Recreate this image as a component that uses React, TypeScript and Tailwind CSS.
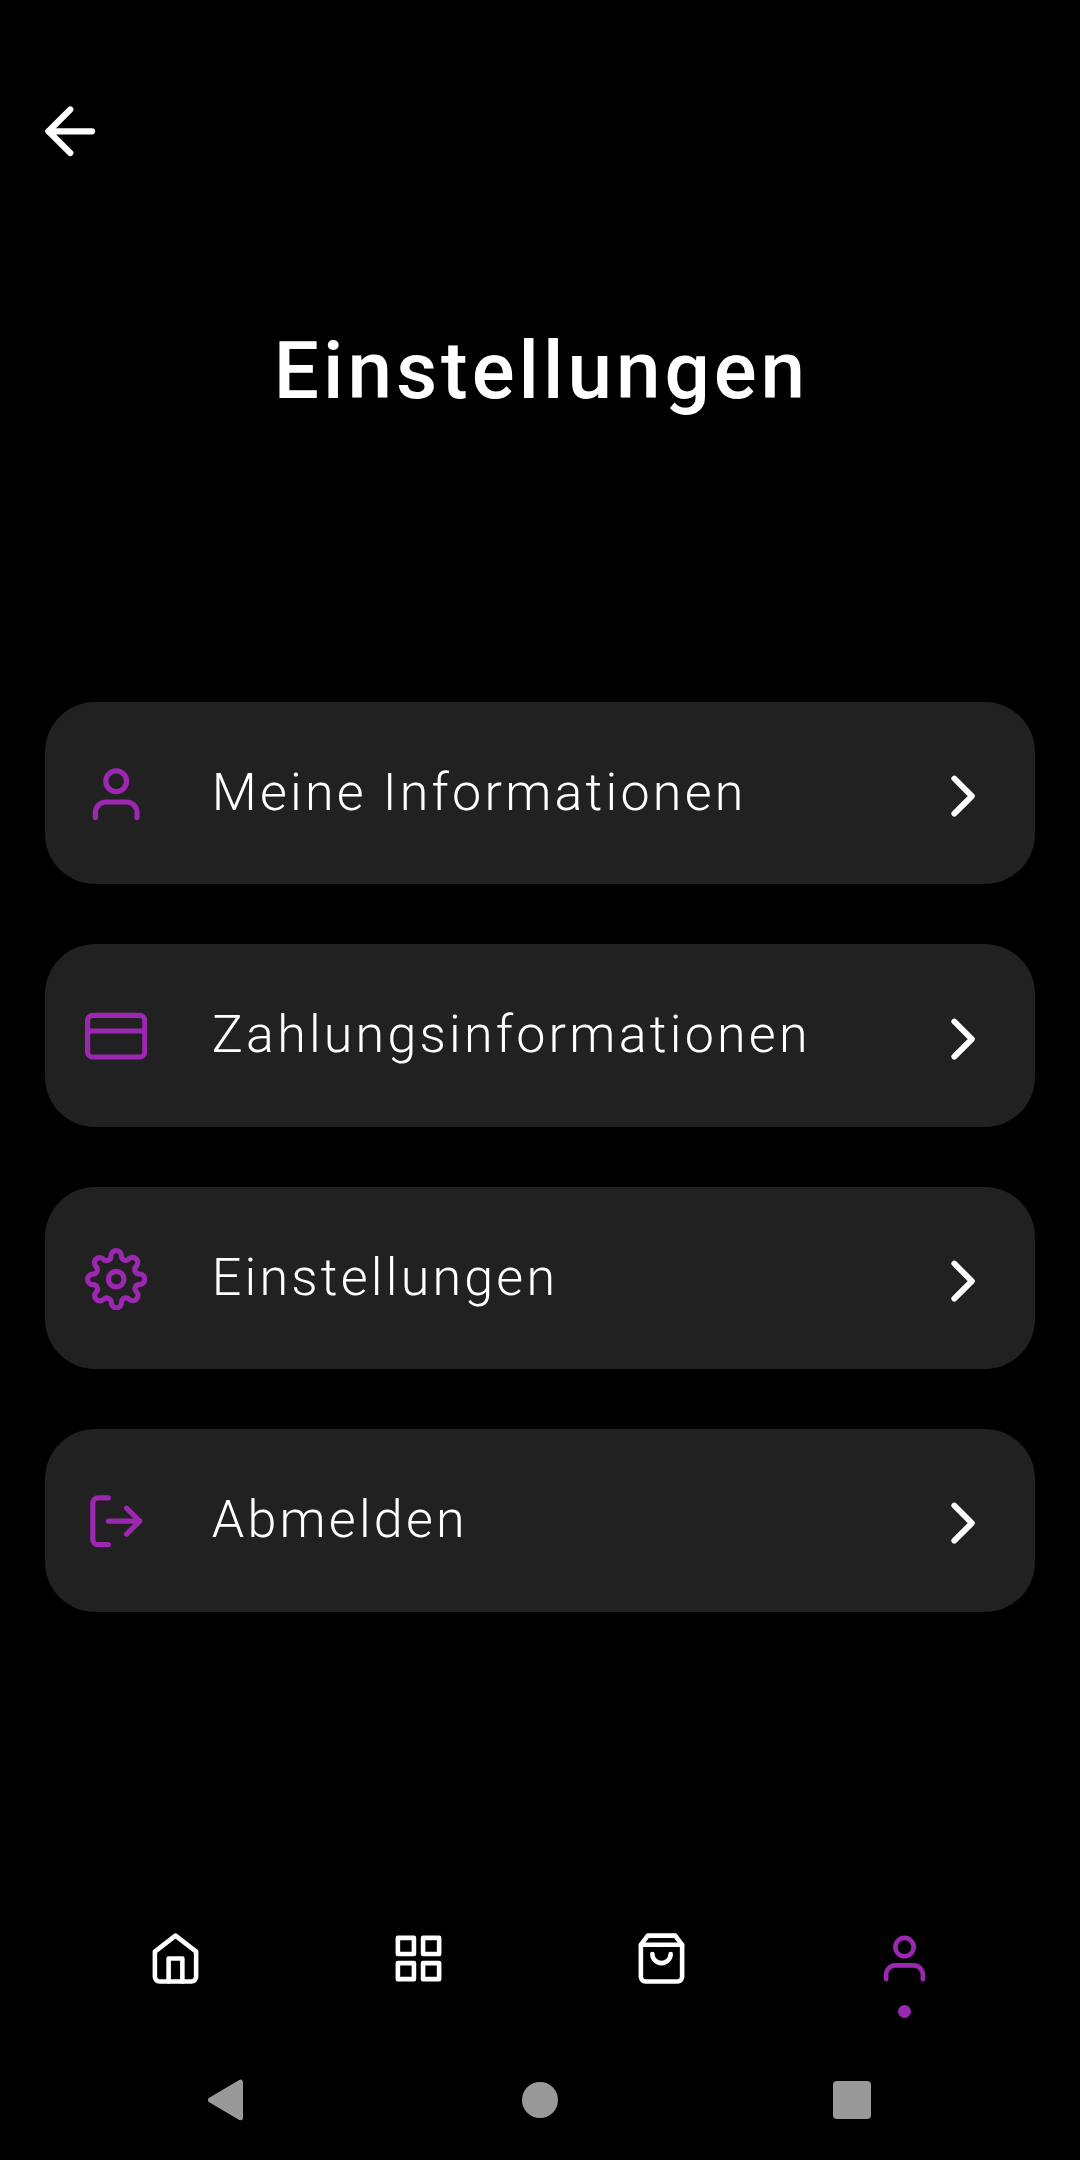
import React from "react";
import { FiArrowLeft, FiUser, FiCreditCard, FiSettings, FiLogOut, FiChevronRight, FiHome, FiGrid, FiShoppingBag } from "react-icons/fi";
import type { IconType } from "react-icons";

const items: { label: string; Icon: IconType }[] = [
  { label: "Meine Informationen", Icon: FiUser },
  { label: "Zahlungsinformationen", Icon: FiCreditCard },
  { label: "Einstellungen", Icon: FiSettings },
  { label: "Abmelden", Icon: FiLogOut },
];

const tabs: { name: string; Icon: IconType; active?: boolean }[] = [
  { name: "home", Icon: FiHome },
  { name: "grid", Icon: FiGrid },
  { name: "bag", Icon: FiShoppingBag },
  { name: "user", Icon: FiUser, active: true },
];

export default function App() {
  return (
    <div className="flex h-[2160px] w-[1080px] flex-col overflow-hidden bg-black font-['Roboto',sans-serif] text-white">
      <header className="h-[245px] shrink-0 pt-[94px] pl-[33px]">
        <FiArrowLeft size={74.6} />
      </header>
      <h1 className="mt-[70px] h-[112px] shrink-0 pl-[3px] text-center text-[80px] leading-[112px] font-medium tracking-[4px]">
        Einstellungen
      </h1>
      <main className="mt-[275px] flex flex-col gap-[60px] px-[45px]">
        {items.map(({ label, Icon }) => (
          <button key={label} className="flex h-[182.4px] shrink-0 items-center rounded-[50px] bg-[#212121] pr-[37px] pl-[40px] text-left">
            <Icon size={62.4} color="#9c27b0" className="mt-[2px] shrink-0" />
            <span className="ml-[64.3px] flex-1 pb-[0.4px] text-[52px] leading-[62px] font-light tracking-[3.22px]">{label}</span>
            <FiChevronRight size={70.2} className="mt-[6.4px] shrink-0" />
          </button>
        ))}
      </main>
      <nav className="mt-[319.4px] flex h-[108px] shrink-0 px-[54px]">
        {tabs.map(({ name, Icon, active }) => (
          <div key={name} className="flex w-[243px] flex-col items-center">
            <Icon size={55} color={active ? "#9c27b0" : "#ffffff"} />
            {active && <span className="mt-[19px] size-[13px] rounded-full bg-[#9c27b0]" />}
          </div>
        ))}
      </nav>
      <footer className="mt-[40px] flex h-[42px] shrink-0 items-center justify-between pr-[209px] pl-[207px]">
        <svg width="39" height="42" viewBox="0 0 39 42" fill="#999999" stroke="#999999" strokeWidth="5" strokeLinejoin="round">
          <path d="M3.5 21 33.5 3.2V38.8Z" />
        </svg>
        <span className="size-[36px] rounded-full bg-[#999999]" />
        <span className="size-[38px] rounded-[4px] bg-[#999999]" />
      </footer>
    </div>
  );
}
